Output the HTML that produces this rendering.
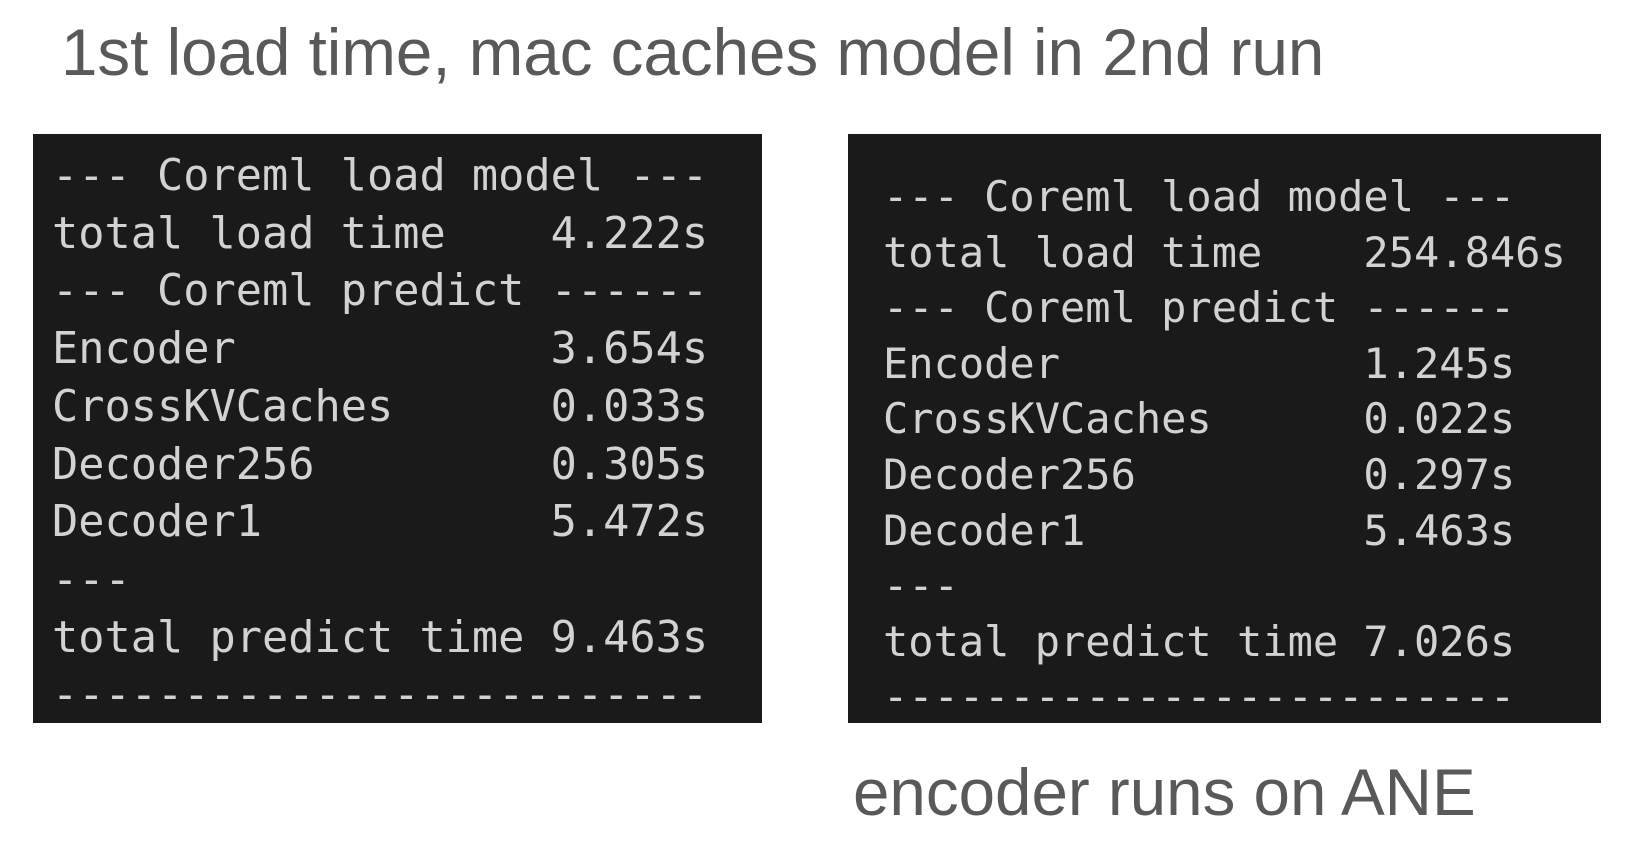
<!DOCTYPE html>
<html><head><meta charset="utf-8"><style>
html,body{margin:0;padding:0;background:#fff;width:1636px;height:862px;overflow:hidden;position:relative}
.t{position:absolute;font-family:"Liberation Sans",Arial,sans-serif;color:#595959;font-size:65.5px;white-space:nowrap;line-height:1}
.box{position:absolute;background:#1a1a1a}
pre{position:absolute;margin:0;font-family:"DejaVu Sans Mono",monospace;color:#d2d2d2;transform-origin:0 0}
</style></head><body>
<div class="t" style="left:61px;top:20px">1st load time, mac caches model in 2nd run</div>
<div class="box" style="left:33px;top:134px;width:729px;height:589px"></div>
<pre style="left:52px;top:148px;font-size:43.6px;line-height:57.7px">--- Coreml load model ---
total load time    4.222s
--- Coreml predict ------
Encoder            3.654s
CrossKVCaches      0.033s
Decoder256         0.305s
Decoder1           5.472s
---
total predict time 9.463s
-------------------------</pre>
<div class="box" style="left:848px;top:134px;width:753px;height:589px"></div>
<pre style="left:883px;top:169px;font-size:42px;line-height:55.6px">--- Coreml load model ---
total load time    254.846s
--- Coreml predict ------
Encoder            1.245s
CrossKVCaches      0.022s
Decoder256         0.297s
Decoder1           5.463s
---
total predict time 7.026s
-------------------------</pre>
<div class="t" style="left:853px;top:760px">encoder runs on ANE</div>
</body></html>
